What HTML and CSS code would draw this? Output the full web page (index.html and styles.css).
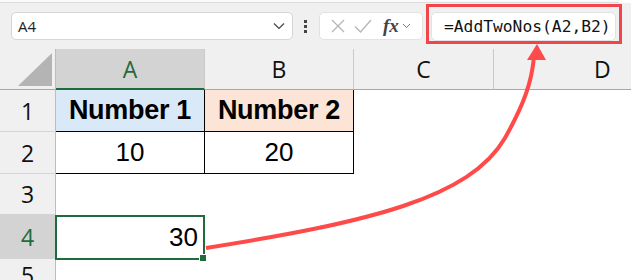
FILE: index.html
```html
<!DOCTYPE html>
<html>
<head>
  <link rel="stylesheet" href="styles.css">
</head>
<body>

<div class="window">
  <div class="ribbon-edge"></div>
  <div class="toolbar">
    <div class="name-box">
      <span>A4</span>
      <svg class="chev" width="12" height="8" viewBox="0 0 12 8"><path d="M1 1.5 L6 6.5 L11 1.5" fill="none" stroke="#444" stroke-width="1.2"/></svg>
    </div>
    <div class="dots"><i></i><i></i><i></i></div>
    <div class="fx-box">
      <svg width="16" height="16" viewBox="0 0 16 16"><path d="M2 2 L14 14 M14 2 L2 14" stroke="#b5b5b5" stroke-width="1.3"/></svg>
      <svg width="18" height="16" viewBox="0 0 18 16"><path d="M1 8.5 L6.5 14 L17 2" fill="none" stroke="#b5b5b5" stroke-width="1.3"/></svg>
      <span class="fx">fx</span>
      <svg class="chev" width="9" height="6" viewBox="0 0 9 6"><path d="M1 1 L4.5 4.5 L8 1" fill="none" stroke="#777" stroke-width="1"/></svg>
    </div>
    <div class="formula">=AddTwoNos(A2,B2)</div>
  </div>

  <div class="sheet">
    <div class="corner"><div class="tri"></div></div>
    <div class="col-head active">A</div>
    <div class="col-head">B</div>
    <div class="col-head">C</div>
    <div class="col-head last">D</div>

    <div class="row-head">1</div>
    <div class="cell hd blue">Number 1</div>
    <div class="cell hd peach">Number 2</div>
    <div class="cell blank"></div>
    <div class="cell blank"></div>

    <div class="row-head">2</div>
    <div class="cell num bordered">10</div>
    <div class="cell num bordered">20</div>
    <div class="cell blank"></div>
    <div class="cell blank"></div>

    <div class="row-head">3</div>
    <div class="cell blank"></div>
    <div class="cell blank"></div>
    <div class="cell blank"></div>
    <div class="cell blank"></div>

    <div class="row-head active">4</div>
    <div class="cell selected">30<span class="handle"></span></div>
    <div class="cell blank"></div>
    <div class="cell blank"></div>
    <div class="cell blank"></div>

    <div class="row-head">5</div>
    <div class="cell blank"></div>
    <div class="cell blank"></div>
    <div class="cell blank"></div>
    <div class="cell blank"></div>
  </div>

  <div class="callout"></div>
  <svg class="arrow" width="631" height="280" viewBox="0 0 631 280">
    <path d="M206 248 C 370 222, 470 198, 505 138 C 524 104, 532 82, 534 56" fill="none" stroke="#ff4a4a" stroke-width="4"/>
    <polygon points="537,44 527,60 546,60" fill="#ff4a4a"/>
  </svg>
</div>

</body>
</html>
```

FILE: styles.css
```css
body {
  margin: 0;
  font-family: "Liberation Sans", Arial, sans-serif;
  background: #ffffff;
}

.window {
  position: relative;
  width: 631px;
  height: 280px;
  overflow: hidden;
}

.ribbon-edge {
  height: 2px;
  background: #fafafa;
  border-bottom: 1px solid #dcdcdc;
  margin-right: 12px;
}

.toolbar {
  display: flex;
  align-items: center;
  height: 46px;
  padding: 0 11px;
  background: #f0f0f0;
  box-sizing: border-box;
}

.name-box {
  display: flex;
  align-items: center;
  justify-content: space-between;
  width: 282px;
  height: 28px;
  box-sizing: border-box;
  padding: 0 7px 0 6px;
  background: #fff;
  border: 1px solid #d6d6d6;
  border-radius: 5px;
  font-family: "Open Sans", "Noto Sans", sans-serif;
  font-size: 15px;
  color: #222;
}

.dots {
  display: flex;
  flex-direction: column;
  gap: 2px;
  margin: 0 12px 0 11px;
}

.dots i {
  display: block;
  width: 3px;
  height: 3px;
  background: #444;
}

.fx-box {
  display: flex;
  align-items: center;
  width: 104px;
  height: 28px;
  box-sizing: border-box;
  padding: 0 4px 0 10px;
  gap: 8px;
  background: #fff;
  border: 1px solid #e2e2e2;
  border-radius: 5px;
}

.fx {
  font-family: "Liberation Serif", "Times New Roman", serif;
  font-style: italic;
  font-weight: bold;
  font-size: 19px;
  color: #444;
  margin-left: 3px;
  margin-right: -5px;
}

.formula {
  height: 29px;
  width: 185px;
  margin-left: 8px;
  box-sizing: border-box;
  padding-left: 12px;
  background: #fff;
  border: 1px solid #e2e2e2;
  border-radius: 5px;
  font-family: "DejaVu Sans Mono", "Liberation Mono", monospace;
  font-size: 16.3px;
  line-height: 27px;
  color: #111;
  white-space: nowrap;
}

.sheet {
  display: grid;
  grid-template-columns: 56px 149px 149px 140px 1fr;
  grid-template-rows: 41px 42px 42px 41px 44px 1fr;
  font-family: "Liberation Sans", Arial, sans-serif;
}

.corner {
  background: #f0f0f0;
  border-right: 1px solid #bdbdbd;
  border-bottom: 1px solid #a8a8a8;
  display: flex;
  align-items: flex-end;
  justify-content: flex-end;
  padding: 0 3px 3px 0;
}

.tri {
  width: 34px;
  height: 33px;
  background: #b4b4b4;
  clip-path: polygon(100% 0, 100% 100%, 0 100%);
}

.col-head {
  display: flex;
  align-items: center;
  justify-content: center;
  background: #f0f0f0;
  border-right: 1px solid #c9c9c9;
  border-bottom: 1px solid #a8a8a8;
  font-family: "Open Sans", "Noto Sans", sans-serif;
  font-size: 23px;
  color: #111;
}

.col-head.last {
  justify-content: flex-start;
  padding-left: 100px;
  border-right: none;
}

.col-head.active {
  background: #d3d3d3;
  color: #1e6b3c;
  border-bottom: 2px solid #1e6b3c;
}

.row-head {
  display: flex;
  align-items: center;
  justify-content: center;
  background: #f0f0f0;
  border-right: 1px solid #bdbdbd;
  border-bottom: 1px solid #d4d4d4;
  font-family: "Open Sans", "Noto Sans", sans-serif;
  font-size: 23px;
  color: #111;
}

.row-head.active {
  background: #d3d3d3;
  color: #1e6b3c;
}

.cell {
  display: flex;
  align-items: center;
  justify-content: center;
  font-size: 26px;
  color: #000;
}

.hd {
  font-weight: bold;
  font-size: 27px;
  letter-spacing: -0.3px;
  border-right: 1.5px solid #000;
  border-bottom: 1.5px solid #000;
}

.blue {
  background: #dae9f8;
}

.peach {
  background: #fce4d6;
}

.bordered {
  border-right: 1.5px solid #000;
  border-bottom: 1.5px solid #000;
}

.selected {
  position: relative;
  justify-content: flex-end;
  padding-right: 5px;
  border: 2px solid #1e6b3c;
  margin: 0 0 -1px -1px;
}

.handle {
  position: absolute;
  right: -4px;
  bottom: -4px;
  width: 6px;
  height: 6px;
  background: #1e6b3c;
  border: 1px solid #fff;
}

.callout {
  position: absolute;
  left: 426px;
  top: 4px;
  width: 196px;
  height: 40px;
  box-sizing: border-box;
  border: 3px solid #f0454a;
}

.arrow {
  position: absolute;
  left: 0;
  top: 0;
}
```
